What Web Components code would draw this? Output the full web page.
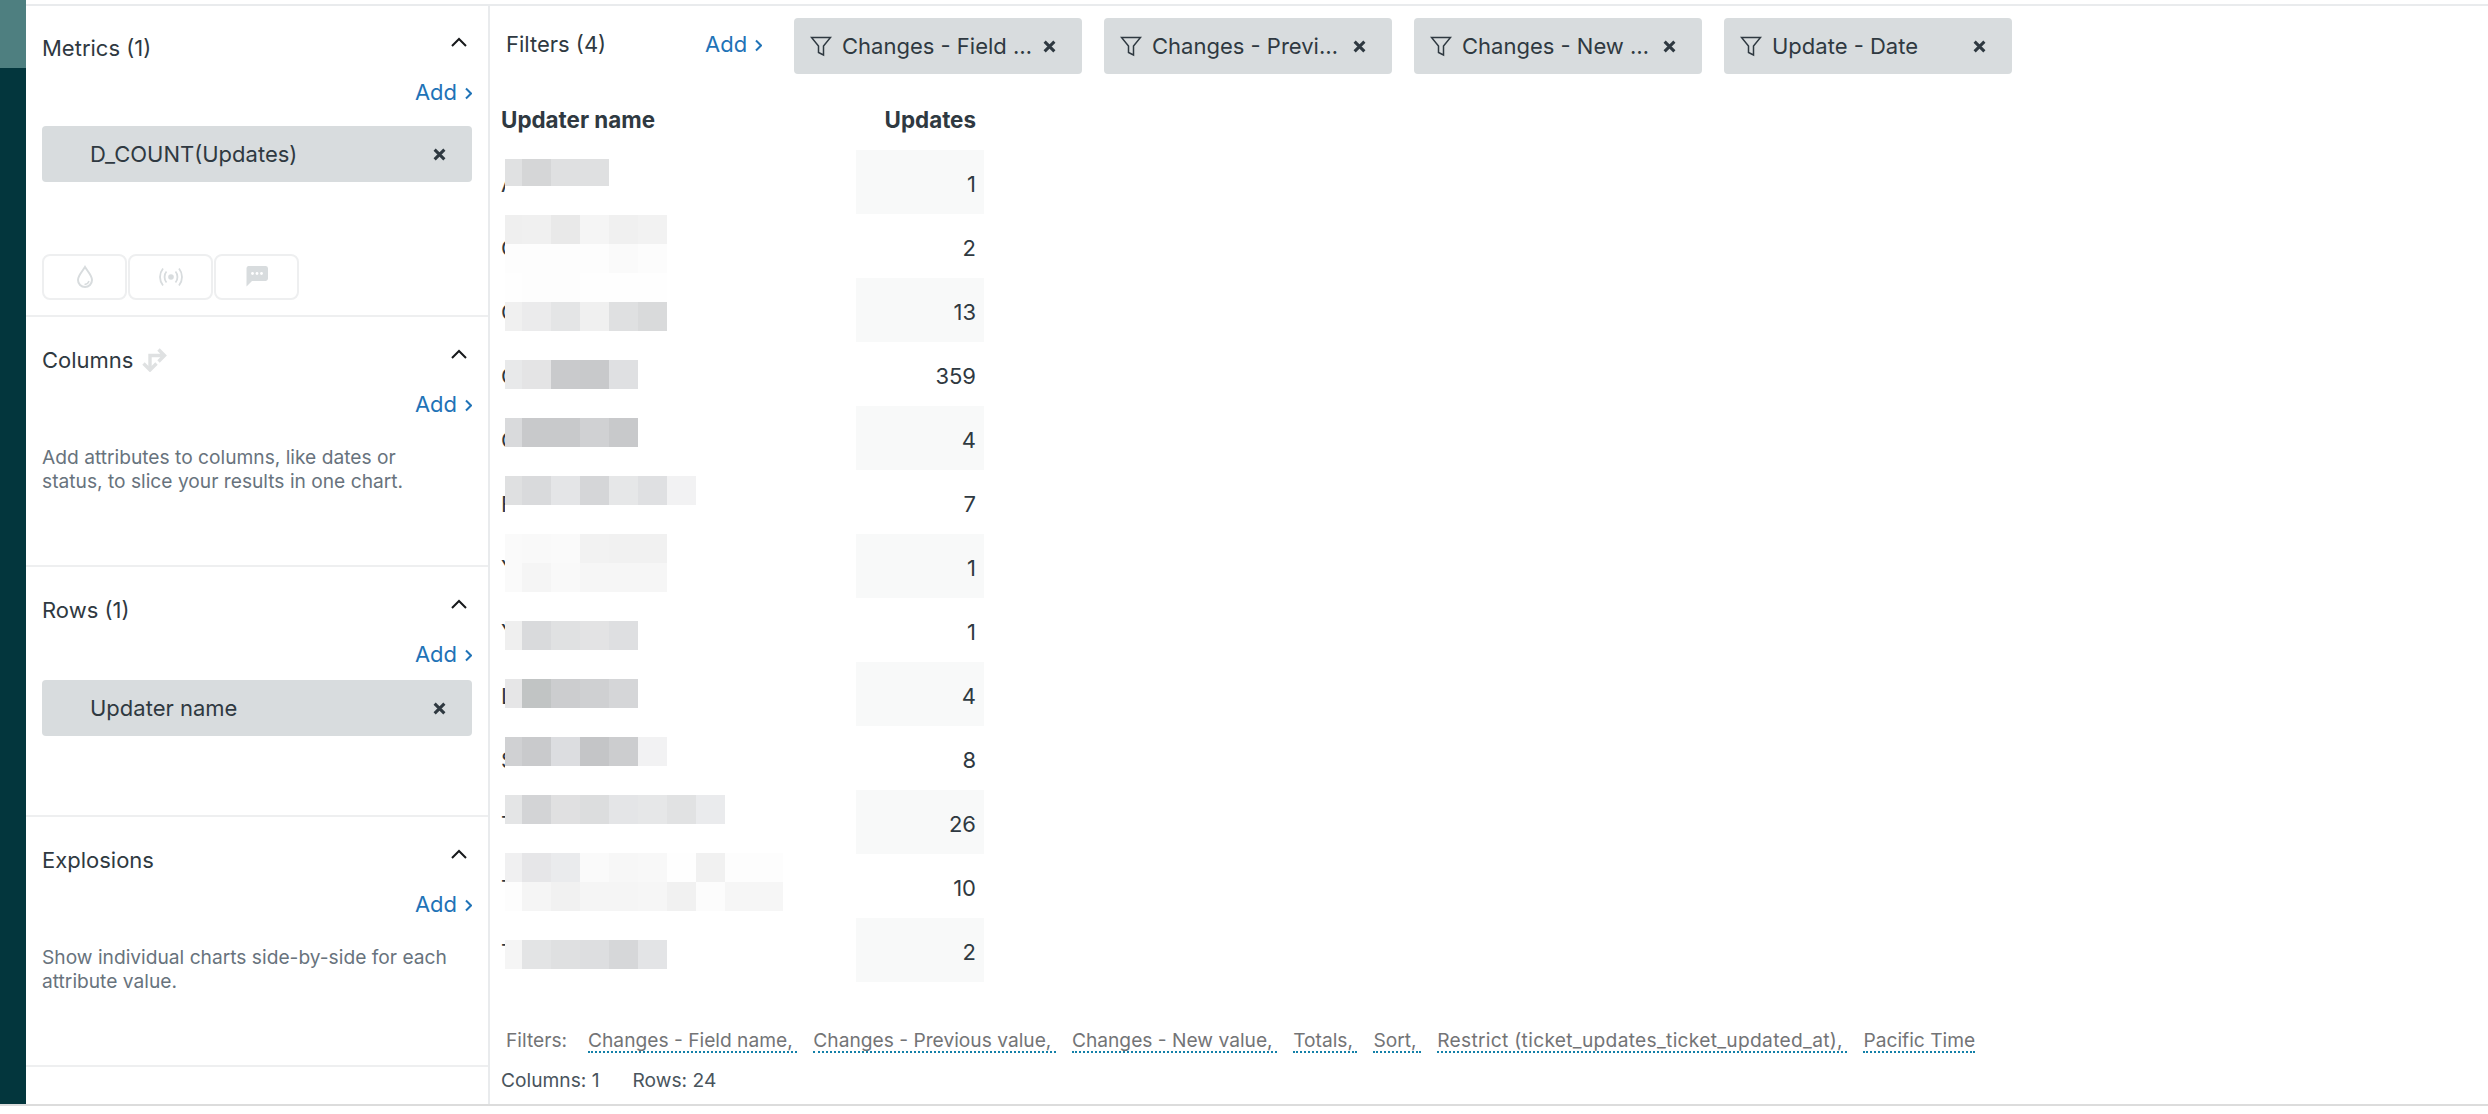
<!DOCTYPE html>
<html>
<head>
<meta charset="utf-8">
<title>Explore query</title>
<style>
  html, body { margin: 0; padding: 0; background: #fff; }
  body { font-family: Inter, "Liberation Sans", sans-serif; color: #2f3941; }
</style>
</head>
<body>
<app-shell>
  <config-panel slot="panel">
    <panel-section heading="Metrics (1)" first>
      <pill-chip style="margin-top:22px">D_COUNT(Updates)</pill-chip>
      <viz-buttons></viz-buttons>
    </panel-section>
    <panel-section heading="Columns" swap>
      <help-text>Add attributes to columns, like dates or status, to slice your results in one chart.</help-text>
    </panel-section>
    <panel-section heading="Rows (1)">
      <pill-chip style="margin-top:14px">Updater name</pill-chip>
    </panel-section>
    <panel-section heading="Explosions">
      <help-text>Show individual charts side-by-side for each attribute value.</help-text>
    </panel-section>
  </config-panel>
  <filter-bar slot="main">
    <filter-chip>Changes - Field …</filter-chip>
    <filter-chip>Changes - Previ…</filter-chip>
    <filter-chip>Changes - New …</filter-chip>
    <filter-chip>Update - Date</filter-chip>
  </filter-bar>
  <result-table slot="main">
    <result-row letter="A" value="1" shaded top="9" h="27" blur="e0e1e2,d5d6d7,dfe0e1,dfe0e1"></result-row>
    <result-row letter="C" value="2" top="1" blur="efefef,f0f0f0,e9e9e9,f5f5f5,f0f0f0,f2f2f2|fdfdfd,fdfdfd,fdfdfd,fdfdfd,fafafa,fcfcfc"></result-row>
    <result-row letter="C" value="13" shaded top="-5" blur="fefefe,fdfdfd,fdfdfd,fefefe,fefefe,fefefe|f0f0f0,ebebec,e4e5e6,f0f0f0,dfe0e1,d9dadb"></result-row>
    <result-row letter="C" value="359" top="18" blur="e8e9ea,e4e4e5,c9cacc,c8c9cb,dfe0e2"></result-row>
    <result-row letter="C" value="4" shaded top="12" blur="d9dadc,c8c9cb,c8c9cb,d0d1d3,c8c9cb"></result-row>
    <result-row letter="F" value="7" top="6" blur="dfe0e1,d9dadc,e4e5e7,d5d6d8,e6e7e8,dfe0e2,f2f2f3"></result-row>
    <result-row letter="Y" value="1" shaded top="0" blur="fafafa,f9f9f9,fafafa,f2f2f2,f1f1f1,f1f1f1|fafafa,f5f5f5,f9f9f9,f6f6f6,f6f6f6,f6f6f6"></result-row>
    <result-row letter="Y" value="1" top="23" blur="efefef,d9dadc,e0e1e2,e3e3e4,dedfe1"></result-row>
    <result-row letter="L" value="4" shaded top="17" blur="e6e6e7,c1c4c4,cccdcf,cfd0d2,d5d6d8"></result-row>
    <result-row letter="S" value="8" top="11" blur="d0d1d3,c9cacc,dcdde0,c4c5c7,cccdcf,f2f2f3"></result-row>
    <result-row letter="T" value="26" shaded top="5" blur="e4e5e6,d3d4d6,e0e0e1,dcddde,e4e5e7,e6e7e8,e1e2e3,eaebed"></result-row>
    <result-row letter="T" value="10" top="-1" blur="f0f0f1,e6e6e8,eaebed,fafafa,f7f7f7,f8f8f8,fefefe,f1f1f1,fdfdfd,fdfdfd|fdfdfd,f5f5f5,f1f1f1,f5f5f5,f5f5f5,f6f6f6,f1f1f1,fcfcfc,f6f6f6,f6f6f6"></result-row>
    <result-row letter="T" value="2" shaded top="22" blur="f5f5f5,e3e4e5,dfe0e1,dddee0,d6d7d9,e3e4e6"></result-row>
  </result-table>
  <query-footer slot="main">
    <dot-link>Changes - Field name,</dot-link>
    <dot-link>Changes - Previous value,</dot-link>
    <dot-link>Changes - New value,</dot-link>
    <dot-link>Totals,</dot-link>
    <dot-link>Sort,</dot-link>
    <dot-link style="letter-spacing:.3px">Restrict (ticket_updates_ticket_updated_at),</dot-link>
    <dot-link>Pacific Time</dot-link>
  </query-footer>
</app-shell>

<script>
//helper so every class below sets its shadow root the same way
function shadow(el, html) {
  el.attachShadow({mode: "open"});
  el.shadowRoot.innerHTML = html;
}

class AppShell extends HTMLElement {
  connectedCallback() {
    shadow(this, `
<style>
  :host { display: block; height: 1106px; box-sizing: border-box; border-bottom: 2px solid #dcdcdc; }
  .wrap { display: flex; height: 100%; }
  .rail { width: 26px; flex: none; background: #03363d; }
  .rail div { height: 68px; background: #4e7f80; }
  .body { flex: 1; display: flex; padding-top: 4px; }
  .inner { flex: 1; display: flex; border-top: 2px solid #e9ebed; }
  .main { flex: 1; display: flex; flex-direction: column; }
</style>
<div class="wrap">
  <div class="rail"><div></div></div>
  <div class="body"><div class="inner">
    <slot name="panel"></slot>
    <div class="main"><slot name="main"></slot></div>
  </div></div>
</div>`);
  }
}

class ConfigPanel extends HTMLElement {
  connectedCallback() {
    shadow(this, `
<style>
  :host { display: block; width: 462px; flex: none; box-sizing: content-box; border-right: 2px solid #e9ebed; }
</style>
<slot></slot>`);
  }
}

class PanelSection extends HTMLElement {
  connectedCallback() {
    const swap = this.hasAttribute("swap") ? `
      <svg class="swap" width="26" height="26" viewBox="0 0 26 26" fill="none" stroke="#dfe1e2" stroke-width="3.4">
        <path d="M9 23V9.5h14M17.5 3.5l6 6-6 6"/><path d="M2.5 17.5l6.5 6.5 6.500-6.500" />
      </svg>` : "";
    shadow(this, `
<style>
  :host { display: block; box-sizing: border-box; height: 250px; padding: 31px 16px 0; border-bottom: 2px solid #eeeff0; }
  :host([first]) { height: 311px; padding-top: 30px; }
  .head { display: flex; align-items: center; height: 24px; font-size: 22px; color: #2f3941; }
  .swap { margin-left: 8px; margin-top: -2px; }
  .chev { margin-left: auto; margin-right: 5px; margin-top: -12px; }
  .add { display: flex; justify-content: flex-end; margin-top: 20px; }
</style>
<div class="head">
  <span>${this.getAttribute("heading")}</span>${swap}
  <svg class="chev" width="16" height="10" viewBox="0 0 16 10" fill="none" stroke="#17191b" stroke-width="2"><path d="M1 9l7-7 7 7"/></svg>
</div>
<div class="add"><add-link></add-link></div>
<slot></slot>`);
  }
}

class AddLink extends HTMLElement {
  connectedCallback() {
    shadow(this, `
<style>
  :host { display: inline-flex; align-items: center; height: 24px; font-size: 22px; color: #1f73b7; }
  svg { margin-left: 8px; margin-top: 2px; }
</style>
Add<svg width="7" height="13" viewBox="0 0 7 13" fill="none" stroke="#1f73b7" stroke-width="2"><path d="M1 1.500l5 5-5 5"/></svg>`);
  }
}

const closeIcon = `<svg width="13" height="13" viewBox="0 0 12 12" fill="none" stroke="#2f3941" stroke-width="2.800"><path d="M1.500 1.500l9 9M10.500 1.500l-9 9"/></svg>`;

class PillChip extends HTMLElement {
  connectedCallback() {
    shadow(this, `
<style>
  :host { display: flex; align-items: center; box-sizing: border-box; height: 56px; padding: 0 26px 0 48px; background: #d8dcde; border-radius: 4px; font-size: 22px; color: #2f3941; justify-content: space-between; }
</style>
<slot></slot>${closeIcon}`);
  }
}

class HelpText extends HTMLElement {
  connectedCallback() {
    shadow(this, `
<style>
  :host { display: block; width: 410px; margin-top: 29px; font-size: 19.200px; line-height: 24px; color: #68737d; }
</style>
<slot></slot>`);
  }
}

class VizButtons extends HTMLElement {
  connectedCallback() {
    shadow(this, `
<style>
  :host { display: flex; gap: 1px; margin-top: 72px; }
  div { width: 85px; height: 46px; box-sizing: border-box; border: 2px solid #eeeff0; border-radius: 8px; display: flex; align-items: center; justify-content: center; }
</style>
<div>
  <svg width="18" height="24" viewBox="0 0 18 24" fill="none" stroke="#d8dcde" stroke-width="2"><path d="M9 2C6 7 2 10.500 2 15a7 7 0 0 0 14 0C16 10.500 12 7 9 2z"/><path d="M13 16c-.5 2-2 3.200-4.500 3.500" stroke-width="1.400"/></svg>
</div>
<div>
  <svg width="24" height="20" viewBox="0 0 24 20" fill="none" stroke="#d8dcde" stroke-width="1.800"><circle cx="12" cy="10" r="2.800" fill="#d8dcde" stroke="none"/><path d="M7.500 4.500c-2.600 3-2.600 8 0 11M16.500 4.500c2.600 3 2.600 8 0 11M4 1.500c-4 5-4 12 0 17M20 1.500c4 5 4 12 0 17"/></svg>
</div>
<div>
  <svg width="24" height="22" viewBox="0 0 24 22" style="margin-top:-3px"><path d="M3 1h18a2.500 2.500 0 0 1 2 2.500v10a2.500 2.500 0 0 1-2 2.500H7l-5.500 5.500V3.500A2.500 2.500 0 0 1 3 1z" fill="#d8dcde"/><g fill="#fff"><circle cx="7.500" cy="8.500" r="1.400"/><circle cx="12" cy="8.500" r="1.400"/><circle cx="16.500" cy="8.500" r="1.400"/></g></svg>
</div>`);
  }
}

class FilterBar extends HTMLElement {
  connectedCallback() {
    shadow(this, `
<style>
  :host { display: flex; align-items: center; padding: 12px 0 0 16px; height: 56px; }
  .label { width: 199px; font-size: 22px; color: #2f3941; margin-top: -4px; flex: none; }
  add-link { margin-top: -4px; }
  .add { width: 89px; flex: none; }
  .chips { display: flex; gap: 22px; }
</style>
<span class="label">Filters (4)</span>
<span class="add"><add-link></add-link></span>
<div class="chips"><slot></slot></div>`);
  }
}

class FilterChip extends HTMLElement {
  connectedCallback() {
    shadow(this, `
<style>
  :host { display: flex; align-items: center; box-sizing: border-box; width: 288px; height: 56px; padding: 0 26px 0 16px; background: #d8dcde; border-radius: 4px; font-size: 22px; color: #2f3941; }
  span { flex: 1; margin-left: 10px; white-space: nowrap; }
</style>
<svg width="22" height="22" viewBox="0 0 22 22" fill="none" stroke="#2f3941" stroke-width="1.500"><path d="M1.500 2.500h19l-7 8.500v9l-5-2.500V11z"/></svg>
<span><slot></slot></span>${closeIcon}`);
  }
}

class ResultTable extends HTMLElement {
  connectedCallback() {
    shadow(this, `
<style>
  :host { display: block; padding: 30px 0 0 11px; }
  .head { display: flex; width: 483px; height: 46px; font-size: 22.400px; font-weight: 700; color: #2f3941; line-height: 32px; box-sizing: border-box; padding-right: 8px; justify-content: space-between; }
</style>
<div class="head"><span>Updater name</span><span>Updates</span></div>
<slot></slot>`);
  }
}

class ResultRow extends HTMLElement {
  connectedCallback() {
    const top = this.getAttribute("top");
    const h = this.getAttribute("h") || "29";
    const lines = this.getAttribute("blur").split("|").map(line => {
      const cells = line.split(",").map(c => `<i style="background:#${c}"></i>`).join("");
      return `<div class="line" style="height:${h}px">${cells}</div>`;
    }).join("");
    shadow(this, `
<style>
  :host { display: flex; width: 483px; height: 64px; font-size: 22px; color: #2f3941; position: relative; }
  .name { width: 355px; flex: none; line-height: 68px; }
  .value { width: 128px; box-sizing: border-box; padding-right: 8px; text-align: right; line-height: 68px; }
  :host([shaded]) .value { background: #f8f9f9; }
  .mask { position: absolute; left: 4px; top: 0; width: 24px; height: 64px; background: #fff; }
  .blur { position: absolute; left: 4px; top: ${top}px; }
  .line { display: flex; }
  i { display: block; width: 29px; }
  i:first-child { width: 17px; }
</style>
<div class="name">${this.getAttribute("letter")}</div>
<div class="value">${this.getAttribute("value")}</div>
<div class="mask"></div>
<div class="blur">${lines}</div>`);
  }
}

class DotLink extends HTMLElement {
  connectedCallback() {
    shadow(this, `
<style>
  :host { display: inline-block; border-bottom: 2px dotted #1380a8; line-height: 22px; white-space: nowrap; }
  :host(:not(:last-child)) { padding-right: 4.500px; }
</style>
<slot></slot>`);
  }
}

class QueryFooter extends HTMLElement {
  connectedCallback() {
    shadow(this, `
<style>
  :host { display: block; padding: 47px 0 0 16px; font-size: 19.200px; }
  .filters { display: flex; gap: 16px; color: #737476; height: 24px; align-items: flex-start; }
  .filters b { font-weight: 400; width: 66px; line-height: 22px; }
  .count { display: flex; gap: 33px; color: #49545c; margin: 16px 0 0 -5px; line-height: 22px; }
</style>
<div class="filters"><b>Filters:</b><slot></slot></div>
<div class="count"><span>Columns: 1</span><span>Rows: 24</span></div>`);
  }
}

customElements.define("app-shell", AppShell);
customElements.define("config-panel", ConfigPanel);
customElements.define("panel-section", PanelSection);
customElements.define("add-link", AddLink);
customElements.define("pill-chip", PillChip);
customElements.define("help-text", HelpText);
customElements.define("viz-buttons", VizButtons);
customElements.define("filter-bar", FilterBar);
customElements.define("filter-chip", FilterChip);
customElements.define("result-table", ResultTable);
customElements.define("result-row", ResultRow);
customElements.define("dot-link", DotLink);
customElements.define("query-footer", QueryFooter);
</script>
</body>
</html>
